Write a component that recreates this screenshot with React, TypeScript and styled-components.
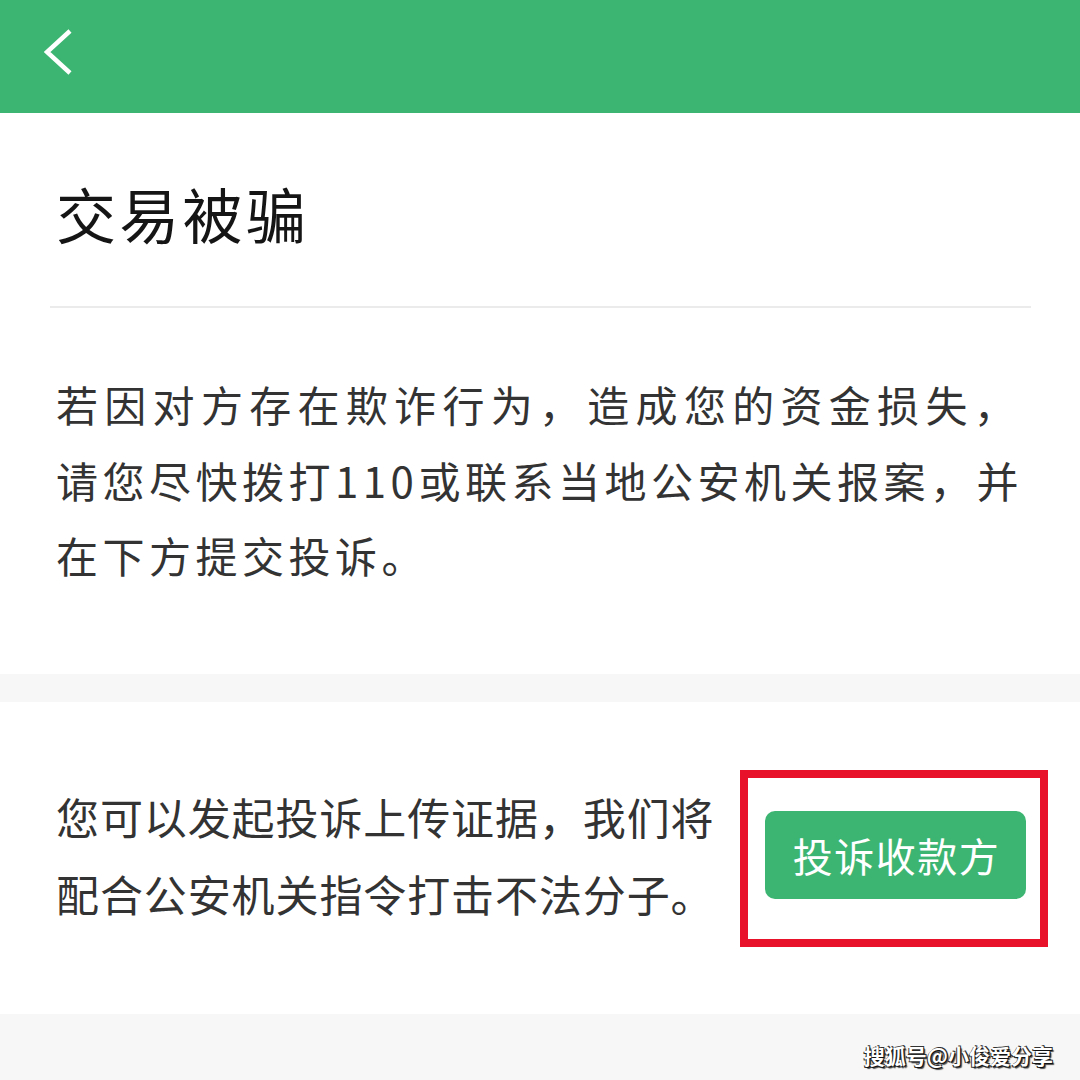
import React from "react";
import styled, { createGlobalStyle } from "styled-components";

const GlobalStyle = createGlobalStyle`
  html, body {
    margin: 0;
    padding: 0;
    background: #f7f7f7;
  }
  body {
    font-family: "Noto Sans CJK SC", "Noto Sans", sans-serif;
  }
`;

const Page = styled.div`
  position: relative;
  width: 1080px;
  height: 1080px;
  overflow: hidden;
  background: #f7f7f7;
  display: flex;
  flex-direction: column;
`;

const Header = styled.header`
  height: 113px;
  flex: none;
  background: #3db572;
  display: flex;
  align-items: flex-start;
  padding: 28px 0 0 44px;
  box-sizing: border-box;
`;

const BackButton = styled.button`
  border: 0;
  background: transparent;
  padding: 0;
  width: 30px;
  height: 48px;
  display: flex;
  cursor: pointer;
`;

const Card = styled.section<{ $gap?: number }>`
  background: #ffffff;
  margin-bottom: ${(p) => p.$gap ?? 0}px;
  flex: none;
`;

const IntroCard = styled(Card)`
  padding: 60px 49px 0 50px;
  height: 561px;
  box-sizing: border-box;
`;

const Title = styled.h1`
  margin: 0;
  padding-left: 6px;
  font-size: 60px;
  line-height: 80px;
  font-weight: 400;
  letter-spacing: 3.3px;
  color: #151515;
`;

const Divider = styled.hr`
  margin: 53px 0 0;
  border: 0;
  height: 2px;
  background: #ebebeb;
`;

const Paragraph = styled.p`
  margin: 58px 0 0;
  padding-left: 6px;
  font-size: 42px;
  line-height: 75.5px;
  color: #333333;
  white-space: nowrap;
`;

const Line = styled.span<{ $tracking: number }>`
  display: block;
  letter-spacing: ${(p) => p.$tracking}px;
`;

const ComplaintCard = styled(Card)`
  height: 312px;
  display: flex;
  align-items: center;
  justify-content: space-between;
  padding: 0 54px 6px 56px;
  box-sizing: border-box;
`;

const Hint = styled.p`
  margin: 0;
  font-size: 43px;
  line-height: 77px;
  letter-spacing: 0.9px;
  color: #333333;
  white-space: nowrap;
`;

const ButtonArea = styled.div`
  position: relative;
  display: flex;
`;

const ActionButton = styled.button`
  width: 261px;
  height: 88px;
  border: 0;
  border-radius: 10px;
  background: #3db572;
  color: #ffffff;
  font-family: "Noto Sans CJK SC", sans-serif;
  font-size: 40px;
  letter-spacing: 1.5px;
  padding: 0 0 0 2px;
  cursor: pointer;
`;

const Highlight = styled.div`
  position: absolute;
  left: -25px;
  top: -41px;
  right: -22px;
  bottom: -48px;
  border: 8px solid #e8132b;
  pointer-events: none;
`;

const Watermark = styled.div`
  position: absolute;
  right: 27px;
  bottom: 10px;
  font-size: 21px;
  font-weight: 700;
  color: #ffffff;
  letter-spacing: 0;
  text-shadow: 1px 1px 0 #111, -1px 1px 0 #333, 1px -1px 0 #333, 2px 2px 1px rgba(0,0,0,0.7);
`;

export default function App() {
  return (
    <>
      <GlobalStyle />
      <Page>
        <Header>
          <BackButton aria-label="返回">
            <svg width="30" height="48" viewBox="0 0 30 48">
              <path
                d="M26 3 L3 24 L26 45"
                fill="none"
                stroke="#ffffff"
                strokeWidth="4.5"
                strokeLinejoin="miter"
              />
            </svg>
          </BackButton>
        </Header>
        <IntroCard $gap={28}>
          <Title>交易被骗</Title>
          <Divider />
          <Paragraph>
            <Line $tracking={6.3}>若因对方存在欺诈行为，造成您的资金损失，</Line>
            <Line $tracking={4.5}>请您尽快拨打110或联系当地公安机关报案，并</Line>
            <Line $tracking={4.5}>在下方提交投诉。</Line>
          </Paragraph>
        </IntroCard>
        <ComplaintCard>
          <Hint>
            您可以发起投诉上传证据，我们将
            <br />
            配合公安机关指令打击不法分子。
          </Hint>
          <ButtonArea>
            <ActionButton>投诉收款方</ActionButton>
            <Highlight />
          </ButtonArea>
        </ComplaintCard>
        <Watermark>搜狐号@小俊爱分享</Watermark>
      </Page>
    </>
  );
}
